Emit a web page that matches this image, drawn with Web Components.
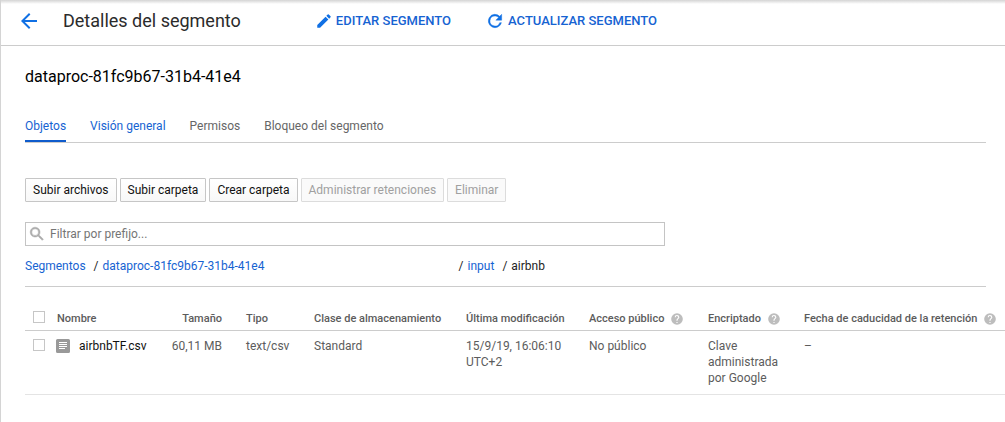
<!DOCTYPE html>
<html lang="es">
<head>
<meta charset="utf-8">
<title>Detalles del segmento</title>
<style>
html, body { margin: 0; min-height: 100%; background: #fff; }
body { font: 12px/16px Roboto, "Liberation Sans", sans-serif; color: #5c5c5c; --link: #1663d2; }
</style>
</head>
<body>
<storage-page></storage-page>
<script>
const define = (name, html, setup) => {
  const template = document.createElement('template');
  template.innerHTML = html;
  customElements.define(name, class extends HTMLElement {
    constructor() {
      super();
      this.attachShadow({ mode: 'open' }).append(template.content.cloneNode(true));
    }
    connectedCallback() { if (setup) setup(this, this.shadowRoot); }
  });
};

const icons = {
  back: '<path d="M20 11H7.83l5.59-5.59L12 4l-8 8 8 8 1.41-1.41L7.83 13H20v-2z"/>',
  edit: '<path d="M3 17.25V21h3.75L17.81 9.94l-3.75-3.75L3 17.25zM20.71 7.04a1 1 0 0 0 0-1.41l-2.34-2.34a1 1 0 0 0-1.41 0l-1.83 1.83 3.75 3.75 1.83-1.83z"/>',
  refresh: '<path stroke="currentColor" stroke-width=".5" d="M17.65 6.35A8 8 0 1 0 19.73 14h-2.08A6 6 0 1 1 12 6c1.66 0 3.14.69 4.22 1.78L13 11h7V4l-2.35 2.35z"/>',
  search: '<path stroke="currentColor" stroke-width=".7" d="M15.5 14h-.79l-.28-.27A6.5 6.5 0 1 0 13.73 14.43l.27.28v.79l5 4.99L20.49 19l-4.99-5zm-6 0a4.5 4.5 0 1 1 0-9 4.5 4.5 0 0 1 0 9z"/>',
  help: '<path d="M12 2a10 10 0 1 0 0 20 10 10 0 0 0 0-20zm1 17h-2v-2h2v2zm2.07-7.75-.9.92C13.45 12.9 13 13.5 13 15h-2v-.5c0-1.1.45-2.1 1.17-2.83l1.24-1.26A2 2 0 1 0 10 9H8a4 4 0 1 1 8 0c0 .88-.36 1.68-.93 2.25z"/>',
  file: '<path fill-rule="evenodd" d="M1.500 0h11A1.500 1.500 0 0 1 14 1.500v11a1.500 1.500 0 0 1-1.500 1.500h-11A1.500 1.500 0 0 1 0 12.500v-11A1.500 1.500 0 0 1 1.500 0zM3 3v1h8V3H3zm0 2v1h8V5H3zm0 2v1h8V7H3zm0 2v1h6V9H3z"/>'
};

define('mat-icon', `
<style>
:host { display: inline-block; flex: none; width: var(--icon-size, 20px); height: var(--icon-size, 20px); }
svg { display: block; width: 100%; height: 100%; fill: currentColor; }
</style>
<svg viewBox="0 0 24 24" aria-hidden="true"></svg>`, (host, root) => {
  const svg = root.querySelector('svg');
  svg.innerHTML = icons[host.getAttribute('name')] || '';
  if (host.hasAttribute('grid')) svg.setAttribute('viewBox', `0 0 ${host.getAttribute('grid')} ${host.getAttribute('grid')}`);
});

define('header-action', `
<style>
:host { display: block; }
button { display: flex; align-items: center; gap: 3px; margin: 0; padding: 0; border: 0; background: none;
  font: 500 13px/20px Roboto, sans-serif; color: var(--link); white-space: nowrap; cursor: pointer; }
mat-icon { color: #1070e4; }
</style>
<button type="button"><mat-icon></mat-icon><span><slot></slot></span></button>`, (host, root) => {
  const icon = root.querySelector('mat-icon');
  icon.setAttribute('name', host.getAttribute('icon'));
  icon.connectedCallback();
});

define('page-header', `
<style>
:host { display: block; }
header { display: flex; align-items: center; height: 42px; padding: 0 16px 3px; border-bottom: 1px solid #ccc;
  background: linear-gradient(#d4d4d4, #fff 4px); }
a { display: flex; color: #1070e4; --icon-size: 24px; }
h1 { margin: 0 74px 0 22px; font: 400 18px/24px Roboto, sans-serif; color: #2b2b2b; white-space: nowrap; }
nav { display: flex; gap: 34px; }
[icon="edit"] { --icon-size: 18px; }
</style>
<header>
  <a href="#segmentos" aria-label="Volver"><mat-icon name="back"></mat-icon></a>
  <h1>Detalles del segmento</h1>
  <nav><header-action icon="edit">EDITAR SEGMENTO</header-action><header-action icon="refresh">ACTUALIZAR SEGMENTO</header-action></nav>
</header>`);

define('tab-bar', `
<style>
:host { display: block; }
nav { display: flex; gap: 24px; border-bottom: 1px solid #ccc; }
a { padding: 4px 0 6px; border-bottom: 2px solid transparent; color: var(--link); text-decoration: none; }
a[aria-current] { border-color: #0f5ccc; }
a.plain { color: #666; }
</style>
<nav><a href="#objetos" aria-current="page">Objetos</a><a href="#general">Visión general</a><a class="plain" href="#permisos">Permisos</a><a class="plain" href="#bloqueo">Bloqueo del segmento</a></nav>`);

define('tool-button', `
<style>
:host { display: block; }
button { display: block; height: 24px; margin: 0; padding: 0 7px; border: 1px solid #c6c6c6; border-radius: 1px;
  background: linear-gradient(#fff, #f8f8f8); font: 12px/22px Roboto, sans-serif; color: #111; white-space: nowrap; }
button:disabled { border-color: #dcdcdc; background: #fafafa; color: #a0a0a0; }
</style>
<button type="button"><slot></slot></button>`, (host, root) => {
  root.querySelector('button').disabled = host.hasAttribute('disabled');
});

define('prefix-filter', `
<style>
:host { display: block; max-width: 640px; }
label { display: flex; align-items: center; gap: 4px; box-sizing: border-box; height: 24px; padding: 0 2px; border: 1px solid #c4c4c4; color: #aaa; --icon-size: 18px; }
input { flex: 1; min-width: 0; padding: 0; border: 0; outline: 0; background: none; font: 12px/20px Roboto, sans-serif; color: #222; }
input::placeholder { color: #757575; opacity: 1; }
</style>
<label><mat-icon name="search"></mat-icon><input type="text" aria-label="Filtrar por prefijo" placeholder="Filtrar por prefijo..."></label>`);

define('path-trail', `
<style>
:host { display: block; }
ol { display: flex; gap: 8px; margin: 0; padding: 0; list-style: none; color: #222; }
li { display: flex; gap: 4px; white-space: nowrap; }
li.bucket { width: 357px; }
a { color: var(--link); text-decoration: none; }
</style>
<ol>
  <li><a href="#segmentos">Segmentos</a></li>
  <li class="bucket"><span>/</span><a href="#bucket">dataproc-81fc9b67-31b4-41e4</a></li>
  <li><span>/</span><a href="#input">input</a></li>
  <li><span>/</span><span>airbnb</span></li>
</ol>`);

define('object-table', `
<style>
:host { display: block; }
table { width: 100%; table-layout: fixed; border-collapse: collapse; text-align: left; }
th, td { padding: 7px 12px 8px; vertical-align: top; }
th { padding: 0 0 3px 12px; font-weight: 500; font-size: 11px; white-space: nowrap; }
tr { border-bottom: 1px solid #e4e4e4; }
thead tr { border-color: #ccc; }
.check { padding-left: 8px; padding-right: 0; }
td.check { padding-top: 8px; }
.size { text-align: right; padding-right: 12px; padding-left: 0; white-space: nowrap; }
input { appearance: none; display: block; box-sizing: border-box; width: 12px; height: 12px; margin: 0; border: 1px solid #c6c6c6; background: #fff; }
.name, .tip { display: flex; align-items: center; gap: 9px; --icon-size: 14px; }
.tip { gap: 6px; }
.tip mat-icon { color: #bdbdbd; }
.name { margin-left: -1px; }
.name mat-icon { color: #999; }
a { color: #111; text-decoration: none; }
</style>
<table>
  <colgroup><col style="width:20px"><col style="width:114px"><col style="width:75px"><col style="width:68px"><col style="width:152px"><col style="width:123px"><col style="width:119px"><col style="width:96px"><col></colgroup>
  <thead><tr>
    <th class="check"><input type="checkbox" aria-label="Seleccionar todo"></th>
    <th>Nombre</th><th class="size">Tamaño</th><th>Tipo</th><th>Clase de almacenamiento</th><th>Última modificación</th>
    <th><span class="tip">Acceso público<mat-icon name="help"></mat-icon></span></th>
    <th><span class="tip">Encriptado<mat-icon name="help"></mat-icon></span></th>
    <th><span class="tip">Fecha de caducidad de la retención<mat-icon name="help"></mat-icon></span></th>
  </tr></thead>
  <tbody><tr>
    <td class="check"><input type="checkbox" aria-label="Seleccionar airbnbTF.csv"></td>
    <td><span class="name"><mat-icon name="file" grid="14"></mat-icon><a href="#airbnbTF.csv">airbnbTF.csv</a></span></td>
    <td class="size">60,11 MB</td><td>text/csv</td><td>Standard</td><td>15/9/19, 16:06:10 UTC+2</td><td>No público</td><td>Clave administrada por Google</td><td>–</td>
  </tr></tbody>
</table>`);

define('storage-page', `
<style>
:host { display: block; box-sizing: border-box; min-height: 100vh; border-left: 1px solid #d4d4d4; }
main { padding-left: 24px; }
h2 { margin: 0; padding: 19px 0 25px; font: 400 16px/24px Roboto, sans-serif; color: #000; }
tab-bar, .browse { margin-right: 19px; }
.tools { display: flex; gap: 3px; padding: 35px 0 20px; }
.browse { padding-bottom: 12px; border-bottom: 1px solid #ccc; }
path-trail { padding-top: 12px; }
object-table { padding-top: 24px; }
</style>
<page-header></page-header>
<main>
  <h2>dataproc-81fc9b67-31b4-41e4</h2>
  <tab-bar></tab-bar>
  <section class="browse">
    <div class="tools">
      <tool-button>Subir archivos</tool-button><tool-button>Subir carpeta</tool-button><tool-button>Crear carpeta</tool-button><tool-button disabled>Administrar retenciones</tool-button><tool-button disabled>Eliminar</tool-button>
    </div>
    <prefix-filter></prefix-filter>
    <path-trail></path-trail>
  </section>
  <object-table></object-table>
</main>`);
</script>
</body>
</html>
